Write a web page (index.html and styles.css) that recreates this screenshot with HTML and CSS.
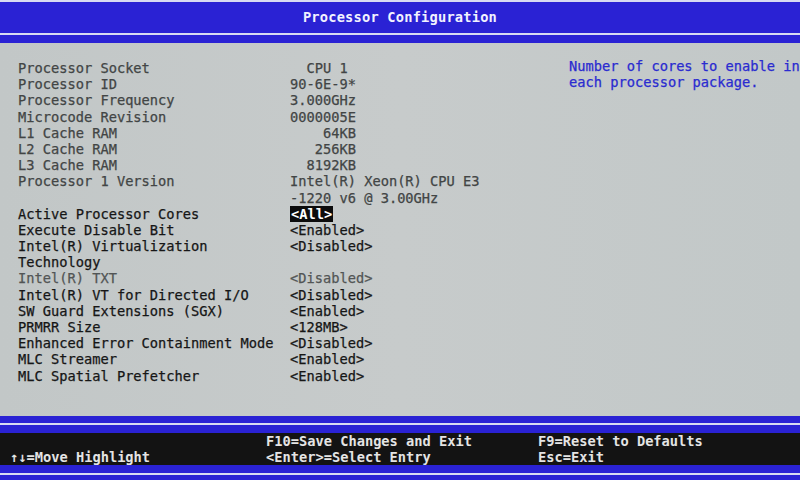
FILE: index.html
```html
<!DOCTYPE html>
<html>
<head>
<meta charset="utf-8">
<link rel="stylesheet" href="styles.css">
</head>
<body>
<div class="screen">
  <header class="header">
    <div class="rule"></div>
    <div class="title">Processor Configuration</div>
    <div class="rule"></div>
  </header>
  <main class="main">
    <div class="list">
      <div class="lbl info">Processor Socket</div><div class="val info">  CPU 1 </div>
      <div class="lbl info">Processor ID</div><div class="val info">90-6E-9*</div>
      <div class="lbl info">Processor Frequency</div><div class="val info">3.000GHz</div>
      <div class="lbl info">Microcode Revision</div><div class="val info">0000005E</div>
      <div class="lbl info">L1 Cache RAM</div><div class="val info">    64KB</div>
      <div class="lbl info">L2 Cache RAM</div><div class="val info">   256KB</div>
      <div class="lbl info">L3 Cache RAM</div><div class="val info">  8192KB</div>
      <div class="lbl info">Processor 1 Version</div><div class="val info">Intel(R) Xeon(R) CPU E3</div>
      <div class="lbl info"></div><div class="val info">-1220 v6 @ 3.00GHz</div>
      <div class="lbl">Active Processor Cores</div><div class="val"><span class="sel">&lt;All&gt;</span></div>
      <div class="lbl">Execute Disable Bit</div><div class="val">&lt;Enabled&gt;</div>
      <div class="lbl">Intel(R) Virtualization</div><div class="val">&lt;Disabled&gt;</div>
      <div class="lbl">Technology</div><div class="val"></div>
      <div class="lbl dim">Intel(R) TXT</div><div class="val dim">&lt;Disabled&gt;</div>
      <div class="lbl">Intel(R) VT for Directed I/O</div><div class="val">&lt;Disabled&gt;</div>
      <div class="lbl">SW Guard Extensions (SGX)</div><div class="val">&lt;Enabled&gt;</div>
      <div class="lbl">PRMRR Size</div><div class="val">&lt;128MB&gt;</div>
      <div class="lbl">Enhanced Error Containment Mode</div><div class="val">&lt;Disabled&gt;</div>
      <div class="lbl">MLC Streamer</div><div class="val">&lt;Enabled&gt;</div>
      <div class="lbl">MLC Spatial Prefetcher</div><div class="val">&lt;Enabled&gt;</div>
    </div>
    <div class="help">
      <div>Number of cores to enable in</div>
      <div>each processor package.</div>
    </div>
  </main>
  <footer class="footer">
    <div class="rule"></div>
    <div class="keys">
      <div class="kcol k1"><div>&nbsp;</div><div>↑↓=Move Highlight</div></div>
      <div class="kcol k2"><div>F10=Save Changes and Exit</div><div>&lt;Enter&gt;=Select Entry</div></div>
      <div class="kcol k3"><div>F9=Reset to Defaults</div><div>Esc=Exit</div></div>
    </div>
    <div class="rule"></div>
  </footer>
</div>
</body>
</html>
```
FILE: styles.css
```css
html, body {
  margin: 0;
  padding: 0;
  width: 800px;
  height: 480px;
  overflow: hidden;
  background: #c4c9c9;
}
.screen {
  width: 800px;
  height: 480px;
  display: flex;
  flex-direction: column;
  font-family: "DejaVu Sans Mono", "Liberation Mono", monospace;
  font-size: 13.7px;
  line-height: 16.2px;
  overflow: hidden;
  -webkit-text-stroke: 0.25px currentColor;
}
.header {
  background: #2a22d4;
  height: 43px;
  display: flex;
  flex-direction: column;
}
.rule {
  height: 2px;
  background: #d8daf2;
  flex: none;
}
.title {
  height: 31px;
  line-height: 31px;
  text-align: center;
  color: #f2f2ff;
  font-weight: bold;
  letter-spacing: 0.2px;
  -webkit-text-stroke: 0;
}
.main {
  flex: 1;
  display: flex;
  padding: 17px 0 0 18px;
  background: linear-gradient(90deg, #c2c7c7 0%, #c7cbcb 50%, #c2c8c8 100%);
}
.list {
  display: grid;
  grid-template-columns: 272px 279px;
  grid-auto-rows: 16.2px;
  color: #161616;
}
.lbl, .val {
  white-space: pre;
}
.info { color: #424545; }
.dim { color: #525555; }
.sel {
  background: #0c0c0c;
  color: #ffffff;
  font-weight: bold;
  padding: 0 1px;
  -webkit-text-stroke: 0;
}
.help {
  color: #2a2bd0;
  white-space: nowrap;
  margin-top: -2px;
}
.footer {
  background: #2a22d4;
  height: 64px;
  display: flex;
  flex-direction: column;
  padding-top: 7px;
  box-sizing: border-box;
}
.footer .rule:last-child {
  margin-top: 8px;
}
.keys {
  margin-top: 8px;
  background: #131313;
  height: 32px;
  display: flex;
  color: #e4e4e4;
  font-weight: bold;
  padding-left: 10px;
  -webkit-text-stroke: 0;
}
.kcol {
  white-space: nowrap;
}
.k1 { width: 256px; }
.k2 { width: 272px; }
.k3 { flex: 1; }
```
